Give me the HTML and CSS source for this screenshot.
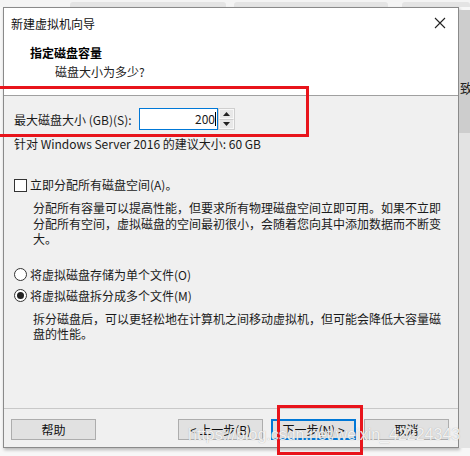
FILE: index.html
```html
<!DOCTYPE html>
<html lang="zh-CN">
<head>
<meta charset="utf-8">
<link rel="stylesheet" href="styles.css">
</head>
<body>
<div class="desk">
  <div class="tabs"><span class="tab t1"></span><span class="tab t2"></span><span class="tab t3"></span></div>
  <div class="row">
    <div class="window">
      <div class="header">
        <div class="titlebar">
          <span class="title">新建虚拟机向导</span>
          <svg class="close" width="12" height="12" viewBox="0 0 12 12"><path d="M1 1L11 11M11 1L1 11" stroke="#222" stroke-width="1.1" fill="none"/></svg>
        </div>
        <div class="h1">指定磁盘容量</div>
        <div class="h2">磁盘大小为多少?</div>
      </div>
      <div class="content">
        <div class="spinrow">
          <span class="label">最大磁盘大小 (GB)(S):</span>
          <div class="input"><span class="val">200</span><span class="caret"></span></div>
          <div class="spin">
            <div class="sbtn"><svg width="7" height="4" viewBox="0 0 7 4"><path d="M0 4L3.5 0L7 4Z" fill="#222"/></svg></div>
            <div class="sbtn"><svg width="7" height="4" viewBox="0 0 7 4"><path d="M0 0L3.5 4L7 0Z" fill="#222"/></svg></div>
          </div>
        </div>
        <div class="suggest">针对 Windows Server 2016 的建议大小: 60 GB</div>
        <div class="optrow chk"><span class="box"></span><span>立即分配所有磁盘空间(A)。</span></div>
        <div class="para p1">分配所有容量可以提高性能，但要求所有物理磁盘空间立即可用。如果不立即<br>分配所有空间，虚拟磁盘的空间最初很小，会随着您向其中添加数据而不断变<br>大。</div>
        <div class="optrow r1"><span class="radio"></span><span>将虚拟磁盘存储为单个文件(O)</span></div>
        <div class="optrow r2"><span class="radio on"></span><span>将虚拟磁盘拆分成多个文件(M)</span></div>
        <div class="para p2">拆分磁盘后，可以更轻松地在计算机之间移动虚拟机，但可能会降低大容量磁<br>盘的性能。</div>
      </div>
      <div class="footer">
        <button class="btn">帮助</button>
        <div class="right">
          <button class="btn">&lt; 上一步(B)</button>
          <button class="btn primary">下一步(N) &gt;</button>
          <button class="btn">取消</button>
        </div>
      </div>
    </div>
    <div class="side">
      <div class="side-top"><span class="cut">致</span></div>
      <div class="side-bot"></div>
    </div>
  </div>
  <div class="mark m1"></div>
  <div class="mark m2"></div>
  <div class="wm">https://blog.csdn.net/weixin_42224343</div>
</div>
</body>
</html>
```
FILE: styles.css
```css
* { box-sizing: border-box; }
html, body { margin: 0; padding: 0; }
body {
  width: 470px;
  height: 456px;
  overflow: hidden;
  background: #f7f7f7;
  font-family: "Noto Sans CJK SC", "Noto Sans", sans-serif;
  font-size: 12px;
  color: #1a1a1a;
}
.desk { position: relative; width: 470px; height: 456px; }
.tabs { height: 7px; display: flex; align-items: flex-end; background: #f4f4f4; }
.tab { height: 5px; background: #e4e4e4; border-radius: 3px 3px 0 0; }
.t1 { margin-left: 70px; width: 160px; }
.t2 { margin-left: 8px; width: 158px; }
.t3 { margin-left: 14px; width: 70px; }
.row { display: flex; }
.window {
  margin-left: 3px;
  width: 456px;
  height: 441px;
  border: 1px solid #8a8a8a;
  background: #f0f0f0;
  display: flex;
  flex-direction: column;
  box-shadow: 1px 2px 3px rgba(0,0,0,0.25);
}
.header {
  background: #fff;
  height: 88px;
  border-bottom: 1px solid #a0a0a0;
}
.titlebar {
  height: 30px;
  display: flex;
  align-items: center;
  justify-content: space-between;
  padding: 0 12px 0 7px;
}
.title { font-size: 12px; color: #111; }
.close { display: block; }
.h1 { margin-top: 7px; padding-left: 26px; font-weight: bold; line-height: 16px; color: #000; }
.h2 { margin-top: 3px; padding-left: 51px; line-height: 16px; color: #222; }
.content { flex: 1; padding: 12px 10px 0 10px; }
.spinrow { display: flex; align-items: center; height: 22px; }
.label { width: 125px; }
.input {
  width: 79px;
  height: 22px;
  border: 1px solid #0078d7;
  background: #fff;
  display: flex;
  align-items: center;
  justify-content: flex-end;
  padding-right: 1px;
}
.val { line-height: 16px; }
.caret { width: 1px; height: 14px; background: #000; margin-left: 0; }
.spin {
  width: 17px;
  height: 22px;
  display: flex;
  flex-direction: column;
  border: 1px solid #cfcfcf;
  background: #e8e8e8;
}
.sbtn { flex: 1; display: flex; align-items: center; justify-content: center; border: 1px solid #f8f8f8; }
.sbtn + .sbtn { border-top: 1px solid #cfcfcf; }
.suggest { margin-top: 6px; line-height: 16px; }
.optrow { display: flex; align-items: center; height: 16px; line-height: 16px; }
.chk { margin-top: 25px; }
.box {
  width: 13px; height: 13px;
  border: 1px solid #333;
  background: #fff;
  margin-right: 3px;
}
.radio {
  width: 13px; height: 13px;
  border: 1px solid #333;
  border-radius: 50%;
  background: #fff;
  margin-right: 3px;
  display: flex; align-items: center; justify-content: center;
}
.radio.on::after {
  content: "";
  width: 7px; height: 7px;
  border-radius: 50%;
  background: #222;
}
.para { margin-left: 19px; line-height: 15.5px; white-space: nowrap; color: #1a1a1a; }
.p1 { margin-top: 7px; }
.r1 { margin-top: 20px; }
.r2 { margin-top: 5px; }
.p2 { margin-top: 7px; }
.footer {
  height: 39px;
  border-top: 1px solid #c8c8c8;
  display: flex;
  justify-content: space-between;
  padding: 10px 9px 0 7px;
}
.right { display: flex; gap: 8px; }
.btn {
  width: 85px;
  height: 21px;
  border: 1px solid #adadad;
  background: #e1e1e1;
  font-family: inherit;
  font-size: 12px;
  color: #111;
  padding: 0;
  line-height: 18px;
}
.btn.primary { border: 2px solid #0078d7; line-height: 16px; }
.side { width: 11px; display: flex; flex-direction: column; }
.side-top { height: 123px; margin-top: 3px; background: #cdcdcd; position: relative; overflow: hidden; }
.cut { position: absolute; left: 1px; top: 70px; font-size: 13px; line-height: 16px; color: #222; }
.side-bot { flex: 1; background: #e3e3e3; }
.mark { position: absolute; border: 3px solid #e8141b; }
.m1 { left: -10px; top: 86px; width: 319px; height: 51px; }
.m2 { left: 277px; top: 405px; width: 86px; height: 50px; }
.wm {
  position: absolute;
  left: 188px;
  top: 426px;
  font-family: "Liberation Sans", Arial, sans-serif;
  font-size: 16px;
  color: rgba(255,255,255,0.85);
  text-shadow: 0 0 1px rgba(120,120,120,0.6);
  white-space: nowrap;
}
```
